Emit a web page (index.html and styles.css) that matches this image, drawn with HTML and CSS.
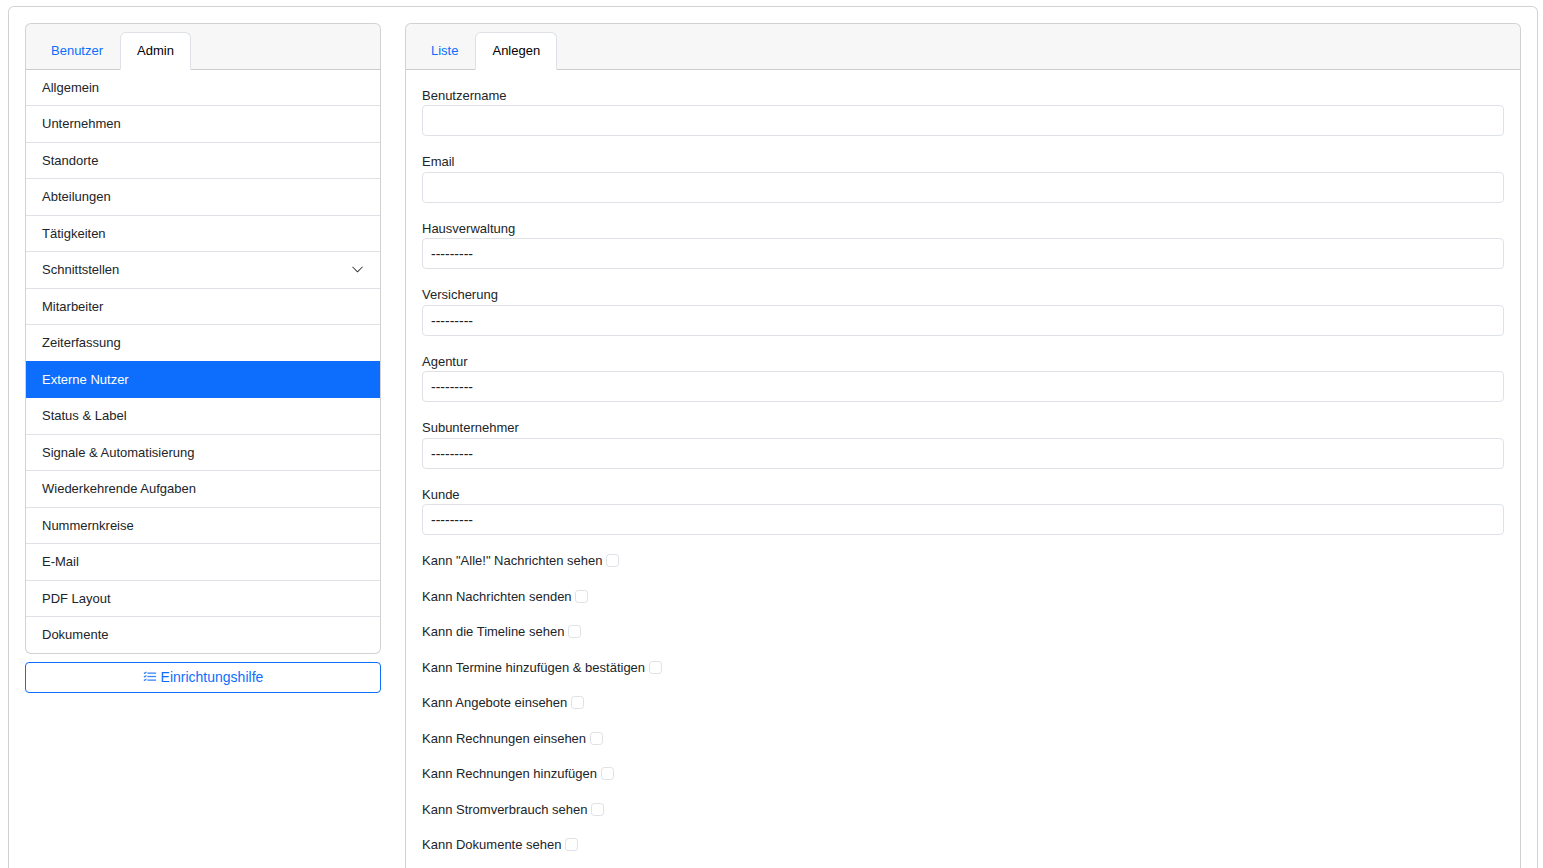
FILE: index.html
```html
<!DOCTYPE html>
<html lang="de">

<head>
    <meta charset="UTF-8">
    <title>Externe Nutzer</title>
    <link rel="stylesheet" href="styles.css">
</head>

<body>
    <main class="card page">
        <aside class="sidebar">
            <div class="card">
                <nav class="card-header">
                    <a class="tab" href="#">Benutzer</a>
                    <a class="tab active" href="#">Admin</a>
                </nav>
                <div class="list">
                    <a class="list-item" href="#">Allgemein</a>
                    <a class="list-item" href="#">Unternehmen</a>
                    <a class="list-item" href="#">Standorte</a>
                    <a class="list-item" href="#">Abteilungen</a>
                    <a class="list-item" href="#">Tätigkeiten</a>
                    <a class="list-item" href="#">
                        Schnittstellen
                        <svg class="icon" viewBox="0 0 16 16" fill="currentColor">
                            <path fill-rule="evenodd" d="M1.646 4.646a.5.5 0 0 1 .708 0L8 10.293l5.646-5.647a.5.5 0 0 1 .708.708l-6 6a.5.5 0 0 1-.708 0l-6-6a.5.5 0 0 1 0-.708z"/>
                        </svg>
                    </a>
                    <a class="list-item" href="#">Mitarbeiter</a>
                    <a class="list-item" href="#">Zeiterfassung</a>
                    <a class="list-item active" href="#">Externe Nutzer</a>
                    <a class="list-item" href="#">Status &amp; Label</a>
                    <a class="list-item" href="#">Signale &amp; Automatisierung</a>
                    <a class="list-item" href="#">Wiederkehrende Aufgaben</a>
                    <a class="list-item" href="#">Nummernkreise</a>
                    <a class="list-item" href="#">E-Mail</a>
                    <a class="list-item" href="#">PDF Layout</a>
                    <a class="list-item" href="#">Dokumente</a>
                </div>
            </div>
            <button class="btn-outline" type="button">
                <svg class="icon" viewBox="0 0 16 16" fill="currentColor">
                    <path fill-rule="evenodd" d="M5 11.5a.5.5 0 0 1 .5-.5h9a.5.5 0 0 1 0 1h-9a.5.5 0 0 1-.5-.5zm0-4a.5.5 0 0 1 .5-.5h9a.5.5 0 0 1 0 1h-9a.5.5 0 0 1-.5-.5zm0-4a.5.5 0 0 1 .5-.5h9a.5.5 0 0 1 0 1h-9a.5.5 0 0 1-.5-.5zM3.854 2.146a.5.5 0 0 1 0 .708l-1.5 1.5a.5.5 0 0 1-.708 0l-.5-.5a.5.5 0 1 1 .708-.708L2 3.293l1.146-1.147a.5.5 0 0 1 .708 0zm0 4a.5.5 0 0 1 0 .708l-1.5 1.5a.5.5 0 0 1-.708 0l-.5-.5a.5.5 0 1 1 .708-.708L2 7.293l1.146-1.147a.5.5 0 0 1 .708 0zm0 4a.5.5 0 0 1 0 .708l-1.5 1.5a.5.5 0 0 1-.708 0l-.5-.5a.5.5 0 0 1 .708-.708l.146.147 1.146-1.147a.5.5 0 0 1 .708 0z"/>
                </svg>
                Einrichtungshilfe
            </button>
        </aside>
        <section class="card content">
            <nav class="card-header">
                <a class="tab" href="#">Liste</a>
                <a class="tab active" href="#">Anlegen</a>
            </nav>
            <form class="form">
                <div class="field">
                    <label for="username">Benutzername</label>
                    <input class="control" type="text" id="username" name="username">
                </div>
                <div class="field">
                    <label for="email">Email</label>
                    <input class="control" type="email" id="email" name="email">
                </div>
                <div class="field">
                    <label for="management">Hausverwaltung</label>
                    <select class="control" id="management" name="management"><option>---------</option></select>
                </div>
                <div class="field">
                    <label for="insurance">Versicherung</label>
                    <select class="control" id="insurance" name="insurance"><option>---------</option></select>
                </div>
                <div class="field">
                    <label for="agency">Agentur</label>
                    <select class="control" id="agency" name="agency"><option>---------</option></select>
                </div>
                <div class="field">
                    <label for="subcontractor">Subunternehmer</label>
                    <select class="control" id="subcontractor" name="subcontractor"><option>---------</option></select>
                </div>
                <div class="field">
                    <label for="customer">Kunde</label>
                    <select class="control" id="customer" name="customer"><option>---------</option></select>
                </div>
                <div class="check">
                    <label for="all_messages">Kann "Alle!" Nachrichten sehen</label>
                    <input type="checkbox" id="all_messages">
                </div>
                <div class="check">
                    <label for="send_messages">Kann Nachrichten senden</label>
                    <input type="checkbox" id="send_messages">
                </div>
                <div class="check">
                    <label for="timeline">Kann die Timeline sehen</label>
                    <input type="checkbox" id="timeline">
                </div>
                <div class="check">
                    <label for="appointments">Kann Termine hinzufügen &amp; bestätigen</label>
                    <input type="checkbox" id="appointments">
                </div>
                <div class="check">
                    <label for="offers">Kann Angebote einsehen</label>
                    <input type="checkbox" id="offers">
                </div>
                <div class="check">
                    <label for="invoices">Kann Rechnungen einsehen</label>
                    <input type="checkbox" id="invoices">
                </div>
                <div class="check">
                    <label for="add_invoices">Kann Rechnungen hinzufügen</label>
                    <input type="checkbox" id="add_invoices">
                </div>
                <div class="check">
                    <label for="power">Kann Stromverbrauch sehen</label>
                    <input type="checkbox" id="power">
                </div>
                <div class="check">
                    <label for="documents">Kann Dokumente sehen</label>
                    <input type="checkbox" id="documents">
                </div>
            </form>
        </section>
    </main>
</body>

</html>
```
FILE: styles.css
```css
* {
    box-sizing: border-box;
}
html {
    height: 100%;
    overflow: hidden;
}
body {
    margin: 0;
    padding: 6px 5px 0 8px;
    background: #fff;
    color: #212529;
    font-family: "Liberation Sans", Arial, sans-serif;
    font-size: 13px;
    line-height: 1.5;
}
a {
    color: #0d6efd;
    text-decoration: none;
}
.icon {
    width: 1em;
    height: 1em;
    vertical-align: -0.125em;
}
.card {
    background: #fff;
    border: 1px solid rgba(0, 0, 0, 0.175);
    background-clip: border-box;
    border-radius: 6px;
}
.page {
    display: grid;
    grid-template-columns: 356px 1fr;
    gap: 24px;
    align-items: start;
    min-height: 100vh;
    padding: 16px;
}

/* Tabs */
.card-header {
    display: flex;
    padding: 8px 8px 0;
    background: rgba(0, 0, 0, 0.03);
    border-bottom: 1px solid rgba(0, 0, 0, 0.175);
    border-radius: 5px 5px 0 0;
}
.tab {
    margin-bottom: -1px;
    padding: 8px 16px;
    border: 1px solid transparent;
    border-radius: 6px 6px 0 0;
}
.tab.active {
    background: #fff;
    border-color: #dee2e6 #dee2e6 #fff;
    color: #000;
}

/* Sidebar */
.list {
    overflow: hidden;
    border-radius: 0 0 5px 5px;
}
.list-item {
    display: flex;
    align-items: center;
    justify-content: space-between;
    padding: 8px 16px;
    border-bottom: 1px solid #dee2e6;
    color: #212529;
}
.list-item:last-child {
    border-bottom: none;
}
.list-item.active {
    margin-top: -1px;
    border-top: 1px solid #0d6efd;
    border-bottom-color: #0d6efd;
    background: #0d6efd;
    color: #fff;
}
.btn-outline {
    display: block;
    width: 100%;
    margin-top: 8px;
    padding: 4px 8px;
    border: 1px solid #0d6efd;
    border-radius: 4px;
    background: transparent;
    color: #0d6efd;
    font-family: inherit;
    font-size: 14px;
    line-height: 1.5;
}
.btn-outline .icon {
    vertical-align: -0.18em;
    stroke: currentColor;
    stroke-width: 0.3;
}

/* Form */
.form {
    padding: 16px;
}
.field,
.check {
    margin-bottom: 16px;
}
.field label {
    display: block;
}
.control {
    display: block;
    width: 100%;
    height: 31px;
    padding: 5px 8px 3px;
    appearance: none;
    border: 1px solid #dee2e6;
    border-radius: 4px;
    background: #fff;
    color: #212529;
    font-family: inherit;
    font-size: 14px;
    line-height: 1.5;
}
.check {
    height: 19.5px;
}
.check input {
    width: 13px;
    height: 13px;
    margin: 3px 0 0;
    appearance: none;
    vertical-align: top;
    border: 1px solid #dee2e6;
    border-radius: 3.25px;
    background: #fff;
}
```
